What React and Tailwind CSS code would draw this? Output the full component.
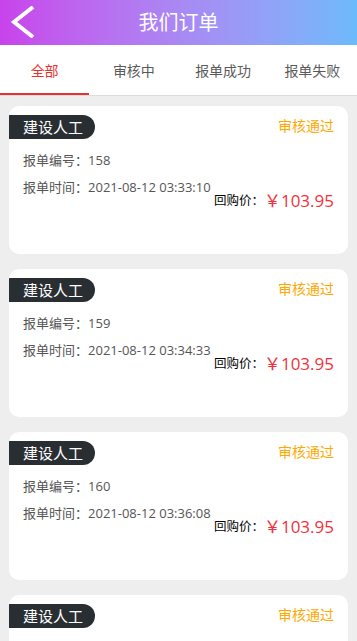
import React from 'react';

const orders = [
    { id: 158, time: '2021-08-12 03:33:10' },
    { id: 159, time: '2021-08-12 03:34:33' },
    { id: 160, time: '2021-08-12 03:36:08' },
    { id: 161, time: '2021-08-12 03:38:21' },
];

const tabs = ['全部', '审核中', '报单成功', '报单失败'];

function OrderCard({ order }) {
    return (
        <div className="bg-white rounded-[10px] h-[148px] pt-[9px] overflow-hidden">
            <div className="flex items-start justify-between">
                <div className="h-6 w-[86px] bg-[#292e33] rounded-r-full text-white text-[15px] leading-6 pl-[14px]">建设人工</div>
                <div className="text-[#ffa800] text-[14px] leading-5 mr-[14px] mt-[1px]">审核通过</div>
            </div>
            <div className="pl-[14px] pr-[14px] text-[13px] text-[#555]">
                <div className="mt-[12px] leading-[18px]">报单编号：{order.id}</div>
                <div className="mt-[9px] leading-[18px]">报单时间：{order.time}</div>
                <div className="flex justify-end items-center -mt-[7px] h-6">
                    <span className="text-[12.5px] text-black">回购价：</span>
                    <span className="text-[17px] text-[#f2313c] leading-6">￥103.95</span>
                </div>
            </div>
        </div>
    );
}

export default function App() {
    return (
        <div className="min-h-screen bg-[#eeeeee] font-['Open_Sans','Noto_Sans_CJK_SC',sans-serif]">
            {/* header */}
            <div className="relative h-[45px] bg-gradient-to-r from-[#c842eb] to-[#6cbafb] flex items-center justify-center">
                <svg className="absolute left-[10px] top-[6px] w-[26px] h-[32px]" viewBox="0 0 26 32" fill="none" stroke="white" strokeWidth="4">
                    <path d="M23 1 L4 16 L23 31" />
                </svg>
                <h1 className="text-white text-[20px] leading-none">我们订单</h1>
            </div>

            {/* tabs */}
            <div className="grid grid-cols-4 h-[51px] bg-white border-b border-[#dddddd]">
                {tabs.map((t, i) => (
                    <div key={t} className={`relative flex items-center justify-center text-[14px] ${i === 0 ? 'text-[#e8322f]' : 'text-[#5a5a5a]'}`}>
                        {t}
                        {i === 0 && <div className="absolute left-0 right-0 bottom-0 h-[2px] bg-[#e8322f]"></div>}
                    </div>
                ))}
            </div>

            {/* list */}
            <div className="px-[9px] pt-[10px] flex flex-col gap-[15px]">
                {orders.map((o) => (
                    <OrderCard key={o.id} order={o} />
                ))}
            </div>
        </div>
    );
}
